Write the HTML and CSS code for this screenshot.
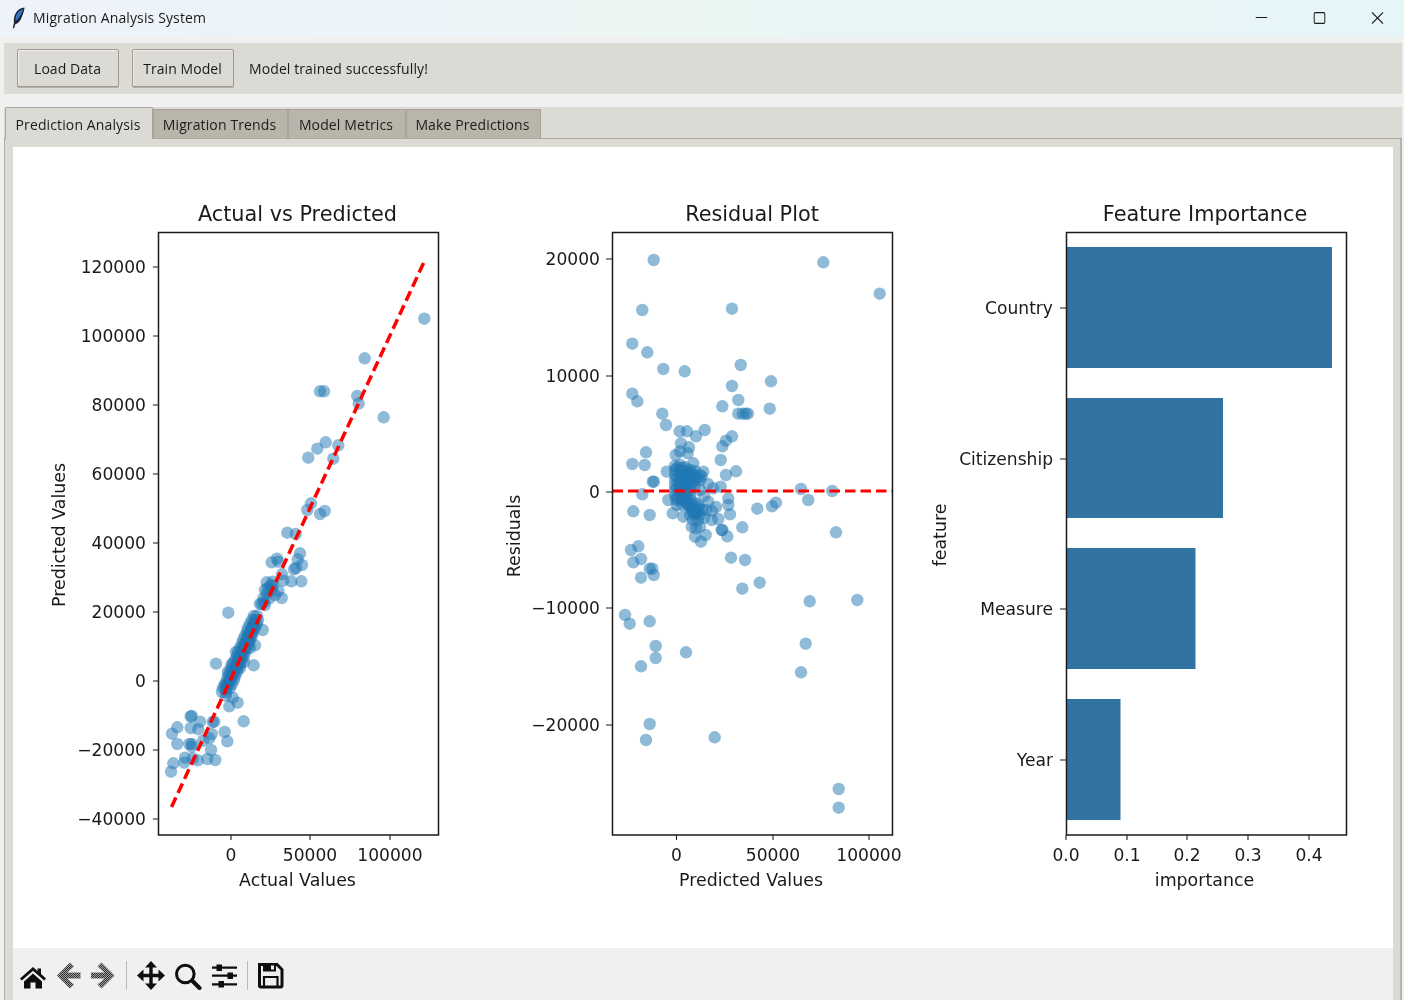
FILE: index.html
```html
<!DOCTYPE html>
<html lang="en">
<head>
<meta charset="utf-8">
<title>Migration Analysis System</title>
<link rel="stylesheet" href="styles.css">
</head>
<body>
<div class="app">
  <header class="titlebar">
    <svg class="feather" viewBox="0 0 13 22" width="13" height="22"><path class="feather-dark" d="M12.500 .5C9 .5 5.500 2.500 3.500 6.500 2 9.500 1.500 13 2 15.500L.8 21 2 21.400 3.400 17C6.500 16.500 8.500 13.500 10 9.500 11.200 6.500 12.500 3 12.500 .5Z"/><path class="feather-blue" d="M11.200 2.200C8.500 2.700 6 4.500 4.700 7.300 3.800 9.500 3.300 12 3.500 14 6 12.500 8 9.500 9.300 6.800 10 5.300 10.800 3.700 11.200 2.200Z"/></svg>
    <span class="title">Migration Analysis System</span>
    <div class="winctl">
      <svg viewBox="0 0 12 12" width="12" height="12"><path class="ctl" d="M0 5.500H12"/></svg>
      <svg viewBox="0 0 12 12" width="12" height="12"><rect class="ctl" x=".6" y=".6" width="10.800" height="10.800" rx="1.500"/></svg>
      <svg viewBox="0 0 12 12" width="12" height="12"><path class="ctl" d="M.4 .4L11.600 11.600M11.600 .4L.4 11.600"/></svg>
    </div>
  </header>

  <section class="controls">
    <button class="btn btn-load">Load Data</button>
    <button class="btn btn-train">Train Model</button>
    <span class="status">Model trained successfully!</span>
  </section>

  <section class="notebook">
    <nav class="tabs">
      <div class="tab active">Prediction Analysis</div>
      <div class="tab t2">Migration Trends</div>
      <div class="tab t3">Model Metrics</div>
      <div class="tab t4">Make Predictions</div>
    </nav>
    <div class="pane">
      <div class="canvas-wrap">
      <svg class="plot" viewBox="13 147 1380 801" width="1380" height="801">
        <!-- Chart 1 -->
        <text class="ttl" x="297.500" y="221">Actual vs Predicted</text>
        <g class="ticks">
          <path d="M153 267h5M153 336h5M153 405h5M153 474h5M153 543h5M153 612h5M153 681h5M153 750h5M153 819h5M231 835v5M310 835v5M390 835v5"/>
        </g>
        <g class="yl">
          <text x="146" y="273">120000</text><text x="146" y="342">100000</text><text x="146" y="411">80000</text><text x="146" y="480">60000</text><text x="146" y="549">40000</text><text x="146" y="618">20000</text><text x="146" y="687">0</text><text x="146" y="756">−20000</text><text x="146" y="825">−40000</text>
        </g>
        <g class="xl"><text x="231" y="861">0</text><text x="310" y="861">50000</text><text x="390" y="861">100000</text></g>
        <text class="axl" x="297.500" y="886">Actual Values</text>
        <text class="axl" transform="translate(65 535) rotate(-90)">Predicted Values</text>
        <g class="pts">
          <circle cx="424.300" cy="318.700"/><circle cx="364.700" cy="358.300"/><circle cx="320" cy="391.300"/><circle cx="324" cy="391.300"/><circle cx="357.300" cy="396"/><circle cx="358.700" cy="403.700"/><circle cx="383.700" cy="417.300"/><circle cx="325.700" cy="442.300"/><circle cx="317.300" cy="448.700"/><circle cx="338.300" cy="445.300"/><circle cx="308.300" cy="457.700"/><circle cx="333.300" cy="458.700"/><circle cx="311" cy="503.300"/><circle cx="307.300" cy="510"/><circle cx="320" cy="514"/><circle cx="324.700" cy="511"/><circle cx="287.300" cy="532.700"/><circle cx="295.700" cy="534"/>
          <circle cx="300" cy="553.300"/><circle cx="297.700" cy="559.300"/><circle cx="302" cy="565"/><circle cx="294" cy="569.300"/><circle cx="296" cy="568"/><circle cx="277" cy="558.700"/><circle cx="271.700" cy="562.300"/><circle cx="278.300" cy="561.700"/><circle cx="282" cy="574.300"/><circle cx="283.300" cy="580.700"/><circle cx="291.300" cy="581.300"/><circle cx="301.300" cy="581.300"/>
          <circle cx="266.700" cy="582.300"/><circle cx="272.700" cy="581.700"/><circle cx="265" cy="590"/><circle cx="271.700" cy="590"/><circle cx="278.300" cy="591"/><circle cx="281.700" cy="598"/><circle cx="263.300" cy="598.300"/><circle cx="261.700" cy="604"/><circle cx="269.300" cy="598.300"/><circle cx="275" cy="595"/><circle cx="266.700" cy="593.300"/><circle cx="265" cy="605"/><circle cx="260" cy="604"/><circle cx="270.700" cy="585"/><circle cx="268" cy="588"/><circle cx="273" cy="586"/><circle cx="264" cy="602"/><circle cx="228.300" cy="612.700"/><circle cx="216" cy="663.700"/><circle cx="253.700" cy="665.300"/><circle cx="262.700" cy="630"/><circle cx="255" cy="645.300"/>
          <circle cx="191.700" cy="716"/><circle cx="190.700" cy="716.500"/><circle cx="190.700" cy="728"/><circle cx="200" cy="721.700"/><circle cx="198.300" cy="729.300"/><circle cx="212.700" cy="722"/><circle cx="214.300" cy="721.700"/><circle cx="177.300" cy="727.300"/><circle cx="172" cy="733.700"/><circle cx="177.300" cy="744"/><circle cx="189.300" cy="744"/><circle cx="192" cy="744"/><circle cx="191.700" cy="746.700"/><circle cx="203.300" cy="740.700"/><circle cx="209.300" cy="738.300"/><circle cx="211.700" cy="734"/><circle cx="224.700" cy="732"/><circle cx="227.300" cy="741.300"/><circle cx="211" cy="750"/><circle cx="185" cy="757.700"/><circle cx="184.300" cy="762.700"/><circle cx="197.700" cy="760.300"/><circle cx="207.300" cy="759"/><circle cx="215.300" cy="760"/><circle cx="192.700" cy="758.300"/><circle cx="173.300" cy="763.300"/><circle cx="171" cy="771.700"/><circle cx="243.700" cy="721.300"/><circle cx="229.300" cy="706.300"/><circle cx="237.700" cy="702.700"/><circle cx="232.700" cy="697.700"/><circle cx="226" cy="695.700"/>
          <circle cx="222" cy="692"/><circle cx="226" cy="692"/><circle cx="223" cy="688"/><circle cx="227" cy="688"/><circle cx="230" cy="688"/><circle cx="225" cy="684"/><circle cx="228" cy="684"/><circle cx="232" cy="684"/><circle cx="227" cy="680"/><circle cx="230" cy="680"/><circle cx="234" cy="680"/><circle cx="228" cy="676"/><circle cx="232" cy="676"/><circle cx="235" cy="676"/><circle cx="230" cy="672"/><circle cx="233" cy="672"/><circle cx="237" cy="672"/><circle cx="231" cy="668"/><circle cx="235" cy="668"/><circle cx="238" cy="668"/><circle cx="233" cy="664"/><circle cx="237" cy="664"/><circle cx="240" cy="664"/><circle cx="235" cy="660"/><circle cx="238" cy="660"/><circle cx="242" cy="660"/><circle cx="237" cy="656"/><circle cx="240" cy="656"/><circle cx="244" cy="656"/><circle cx="238" cy="652"/><circle cx="242" cy="652"/><circle cx="245" cy="652"/><circle cx="240" cy="648"/><circle cx="243" cy="648"/><circle cx="247" cy="648"/><circle cx="242" cy="644"/><circle cx="245" cy="644"/><circle cx="249" cy="644"/><circle cx="243" cy="640"/><circle cx="247" cy="640"/><circle cx="250" cy="640"/><circle cx="245" cy="636"/><circle cx="248" cy="636"/><circle cx="252" cy="636"/><circle cx="247" cy="632"/><circle cx="250" cy="632"/><circle cx="253" cy="632"/><circle cx="248" cy="628"/><circle cx="252" cy="628"/><circle cx="255" cy="628"/><circle cx="250" cy="624"/><circle cx="254" cy="624"/><circle cx="257" cy="624"/><circle cx="252" cy="620"/><circle cx="255" cy="620"/><circle cx="258" cy="620"/><circle cx="254" cy="616"/><circle cx="257" cy="616"/>
          <circle cx="225" cy="686"/><circle cx="229" cy="682"/><circle cx="231" cy="678"/><circle cx="233" cy="674"/><circle cx="235" cy="670"/><circle cx="237" cy="666"/><circle cx="239" cy="662"/><circle cx="240" cy="658"/><circle cx="242" cy="654"/><circle cx="244" cy="650"/><circle cx="246" cy="646"/><circle cx="248" cy="642"/><circle cx="249" cy="638"/><circle cx="251" cy="634"/><circle cx="252" cy="630"/><circle cx="254" cy="626"/><circle cx="240" cy="668"/><circle cx="244" cy="662"/><circle cx="228" cy="672"/><circle cx="232" cy="664"/><circle cx="236" cy="652"/><circle cx="250" cy="648"/>
        </g>
        <path class="core-line" d="M226 688L254 622"/>
        <path class="redline" d="M171.500 807L424.500 261"/>
        <rect class="frame" x="158.500" y="232.500" width="280" height="602.500"/>

        <!-- Chart 2 -->
        <text class="ttl" x="752" y="221">Residual Plot</text>
        <g class="ticks">
          <path d="M606 259h6M606 376h6M606 492h6M606 608h6M606 725h6M676.500 835v5M773 835v5M869 835v5"/>
        </g>
        <g class="yl">
          <text x="600" y="265">20000</text><text x="600" y="382">10000</text><text x="600" y="498">0</text><text x="600" y="614">−10000</text><text x="600" y="731">−20000</text>
        </g>
        <g class="xl"><text x="676.500" y="861">0</text><text x="773" y="861">50000</text><text x="869" y="861">100000</text></g>
        <text class="axl" x="751" y="886">Predicted Values</text>
        <text class="axl" transform="translate(520 536) rotate(-90)">Residuals</text>
        <g class="pts">
          <circle cx="653.700" cy="260"/><circle cx="823.300" cy="262.300"/><circle cx="879.700" cy="293.700"/><circle cx="642.300" cy="310"/><circle cx="732" cy="308.700"/><circle cx="632.300" cy="343.700"/><circle cx="647.300" cy="352.300"/><circle cx="663.300" cy="369"/><circle cx="684.700" cy="371.300"/><circle cx="740.700" cy="365"/><circle cx="771" cy="381.300"/><circle cx="732" cy="386"/><circle cx="632.300" cy="393.700"/><circle cx="637.300" cy="401.300"/><circle cx="738.300" cy="400"/><circle cx="722.300" cy="406.300"/><circle cx="769.700" cy="408.700"/><circle cx="738.300" cy="413.700"/><circle cx="742.700" cy="413.700"/><circle cx="745.700" cy="413.700"/><circle cx="748" cy="413.700"/><circle cx="662.300" cy="413.700"/><circle cx="666" cy="425"/><circle cx="679.700" cy="431.300"/><circle cx="687" cy="431.300"/><circle cx="696" cy="436.300"/><circle cx="704.700" cy="430"/><circle cx="732" cy="436.300"/><circle cx="726" cy="440.700"/><circle cx="722.300" cy="446.300"/><circle cx="681" cy="443.300"/><circle cx="689" cy="447.300"/><circle cx="680" cy="451.300"/><circle cx="675.700" cy="455"/><circle cx="646" cy="452.300"/><circle cx="687.700" cy="453.300"/><circle cx="720.700" cy="460"/><circle cx="632.300" cy="464"/><circle cx="644.700" cy="465"/><circle cx="736" cy="471.300"/><circle cx="726" cy="475"/><circle cx="652.700" cy="481.700"/><circle cx="654" cy="481.700"/><circle cx="642.300" cy="494.300"/><circle cx="801" cy="489"/><circle cx="832.300" cy="491"/><circle cx="808.300" cy="500"/><circle cx="776" cy="502.700"/><circle cx="772" cy="506.300"/><circle cx="757.300" cy="508.700"/><circle cx="633.300" cy="511.300"/><circle cx="649.700" cy="515"/>
          <circle cx="836" cy="532.300"/><circle cx="742.300" cy="527.300"/><circle cx="722.300" cy="530"/><circle cx="727.300" cy="536.300"/><circle cx="731" cy="557.700"/><circle cx="745" cy="560"/><circle cx="638.300" cy="546.300"/><circle cx="631" cy="550"/><circle cx="641" cy="559"/><circle cx="633.300" cy="562.300"/><circle cx="649.700" cy="568.700"/><circle cx="652.300" cy="568.700"/><circle cx="653.700" cy="575"/><circle cx="641" cy="577.700"/><circle cx="759.700" cy="582.700"/><circle cx="742.300" cy="588.700"/><circle cx="809.700" cy="601.300"/><circle cx="857.300" cy="600"/><circle cx="625" cy="615"/><circle cx="629.700" cy="623.700"/><circle cx="649.700" cy="621.300"/><circle cx="655.700" cy="646"/><circle cx="686" cy="652.300"/><circle cx="805.700" cy="643.700"/><circle cx="655.700" cy="658"/><circle cx="641" cy="666.300"/><circle cx="801" cy="672.300"/><circle cx="649.700" cy="724"/><circle cx="646" cy="740"/><circle cx="714.700" cy="737.300"/><circle cx="838.700" cy="789"/><circle cx="838.700" cy="807.700"/>
          <circle cx="695" cy="536.700"/><circle cx="701" cy="541.700"/><circle cx="705.700" cy="535"/><circle cx="691.700" cy="526.700"/><circle cx="700" cy="526.700"/><circle cx="711.700" cy="520"/><circle cx="718.300" cy="519"/><circle cx="721.700" cy="530"/><circle cx="730" cy="514.300"/><circle cx="728.300" cy="505"/><circle cx="728.300" cy="498.300"/><circle cx="720.700" cy="486.700"/><circle cx="708.300" cy="501.700"/><circle cx="713.300" cy="488.300"/><circle cx="701.700" cy="476.700"/><circle cx="666.700" cy="471.700"/><circle cx="668.300" cy="500"/><circle cx="672.700" cy="513.300"/><circle cx="683.300" cy="516.700"/><circle cx="693.300" cy="463.300"/><circle cx="703.300" cy="471.700"/><circle cx="706" cy="510"/><circle cx="704" cy="496"/><circle cx="700" cy="490"/><circle cx="712" cy="511"/><circle cx="716" cy="507"/><circle cx="708" cy="484"/><circle cx="696" cy="528"/>
          <circle cx="675" cy="466"/><circle cx="680" cy="465"/><circle cx="685" cy="467"/><circle cx="675" cy="470"/><circle cx="680" cy="470"/><circle cx="685" cy="471"/><circle cx="690" cy="470"/><circle cx="695" cy="471"/><circle cx="675" cy="475"/><circle cx="680" cy="475"/><circle cx="685" cy="475"/><circle cx="690" cy="475"/><circle cx="695" cy="476"/><circle cx="700" cy="475"/><circle cx="675" cy="480"/><circle cx="680" cy="480"/><circle cx="685" cy="480"/><circle cx="690" cy="480"/><circle cx="695" cy="480"/><circle cx="700" cy="480"/><circle cx="675" cy="485"/><circle cx="680" cy="485"/><circle cx="685" cy="485"/><circle cx="690" cy="485"/><circle cx="695" cy="485"/><circle cx="675" cy="490"/><circle cx="680" cy="490"/><circle cx="685" cy="490"/><circle cx="690" cy="490"/><circle cx="675" cy="495"/><circle cx="680" cy="495"/><circle cx="685" cy="495"/><circle cx="690" cy="495"/><circle cx="676" cy="500"/><circle cx="681" cy="500"/><circle cx="686" cy="500"/><circle cx="691" cy="500"/><circle cx="677" cy="505"/><circle cx="682" cy="505"/><circle cx="688" cy="505"/><circle cx="693" cy="505"/><circle cx="698" cy="505"/><circle cx="692" cy="510"/><circle cx="697" cy="510"/><circle cx="702" cy="510"/><circle cx="690" cy="515"/><circle cx="695" cy="515"/><circle cx="700" cy="515"/><circle cx="693" cy="520"/><circle cx="698" cy="520"/><circle cx="704" cy="518"/>
          <circle cx="677" cy="468"/><circle cx="682" cy="468"/><circle cx="687" cy="473"/><circle cx="692" cy="473"/><circle cx="697" cy="478"/><circle cx="677" cy="478"/><circle cx="682" cy="478"/><circle cx="687" cy="483"/><circle cx="692" cy="483"/><circle cx="677" cy="488"/><circle cx="682" cy="488"/><circle cx="687" cy="493"/><circle cx="677" cy="498"/><circle cx="682" cy="498"/><circle cx="687" cy="503"/><circle cx="692" cy="508"/><circle cx="697" cy="513"/><circle cx="693" cy="513"/><circle cx="699" cy="508"/><circle cx="695" cy="503"/>
        </g>
        <path class="core-area" d="M677 469L692 468 698 474 698 482 690 490 692 501 701 510 699 518 692 518 684 509 677 500 675 485Z"/>
        <path class="redline thin" d="M612.500 491H892"/>
        <rect class="frame" x="612.500" y="232.500" width="280" height="602.500"/>

        <!-- Chart 3 -->
        <text class="ttl" x="1205" y="221">Feature Importance</text>
        <rect class="bar" x="1066" y="247" width="266" height="121"/>
        <rect class="bar" x="1066" y="398" width="157" height="120"/>
        <rect class="bar" x="1066" y="548" width="129.500" height="121"/>
        <rect class="bar" x="1066" y="699" width="54.500" height="121"/>
        <g class="ticks">
          <path d="M1060 308h6M1060 459h6M1060 609h6M1060 760h6M1066 835v5M1127 835v5M1187 835v5M1248 835v5M1309 835v5"/>
        </g>
        <g class="yl">
          <text x="1053" y="314">Country</text><text x="1053" y="465">Citizenship</text><text x="1053" y="615">Measure</text><text x="1053" y="766">Year</text>
        </g>
        <g class="xl"><text x="1066" y="861">0.0</text><text x="1127" y="861">0.1</text><text x="1187" y="861">0.2</text><text x="1248" y="861">0.3</text><text x="1309" y="861">0.4</text></g>
        <text class="axl" x="1204.500" y="886">importance</text>
        <text class="axl" transform="translate(945.500 535) rotate(-90)">feature</text>
        <rect class="frame" x="1066.500" y="232.500" width="280" height="602.500"/>
      </svg>
      </div>
      <div class="navbar">
        <svg class="ic" viewBox="0 0 26 30" width="26" height="30"><path class="solid" d="M13 7L0 18.500 1.800 20.500 13 10.800 24.200 20.500 26 18.500 21 14V8.500H17.500V11Z"/><path class="solid" d="M4 21.500L13 13.500 22 21.500V28.500H15.500V22.500H10.500V28.500H4Z"/></svg>
        <svg class="ic" viewBox="0 0 25 30" width="25" height="30"><defs><pattern id="dither" width="2" height="2" patternUnits="userSpaceOnUse"><rect width="2" height="2" fill="#a0a0a0"/><rect width="1" height="1" fill="#303030"/><rect x="1" y="1" width="1" height="1" fill="#303030"/></pattern></defs><path class="dith" d="M1 15.500L14 2.500 18 6.500 11 12.500H24.500V18.500H11L18 24.500 14 28.500Z"/></svg>
        <svg class="ic" viewBox="0 0 25 30" width="25" height="30"><path class="dith" d="M23.500 15.500L10.500 2.500 6.500 6.500 13.500 12.500H0V18.500H13.500L6.500 24.500 10.500 28.500Z"/></svg>
        <span class="vsep"></span>
        <svg class="ic" viewBox="0 0 28 30" width="28" height="30"><path class="solid" d="M14 1L20 7.500H15.700V13.800H21.500V9.500L28 15.500 21.500 21.500V17.200H15.700V23.500H20L14 30 8 23.500H12.300V17.200H6.500V21.500L0 15.500 6.500 9.500V13.800H12.300V7.500H8Z"/></svg>
        <svg class="ic" viewBox="0 0 27 30" width="27" height="30"><circle class="line" cx="10.300" cy="14" r="8.800"/><path class="line fat" d="M17.500 21L24.500 28"/></svg>
        <svg class="ic" viewBox="0 0 25 30" width="25" height="30"><path class="line thin2" d="M0 7.700H25M0 15.700H25M0 24.300H25"/><rect class="solid" x="4.500" y="4.500" width="5.500" height="6.500"/><rect class="solid" x="15.500" y="12.500" width="5.500" height="6.500"/><rect class="solid" x="6.500" y="21" width="5.500" height="6.500"/></svg>
        <span class="vsep"></span>
        <svg class="ic" viewBox="0 0 26 30" width="26" height="30"><path class="line" d="M1.500 4.500H19L24 9.500V25.500Q24 27 22.500 27H3Q1.500 27 1.500 25.500Z"/><path class="solid" d="M5 4H18V11.500H5Z"/><rect class="slot" x="13" y="5.500" width="3" height="4"/><path class="line thin2" d="M6 26.500V17H19.500V26.500"/></svg>
      </div>
    </div>
  </section>
</div>
</body>
</html>
```

FILE: styles.css
```css
* { box-sizing: border-box; }
html, body { margin: 0; padding: 0; }
body {
  width: 1404px;
  height: 1000px;
  overflow: hidden;
  background: #f0f0f0;
  font-family: "Open Sans", "Noto Sans", sans-serif;
  color: #1a1a1a;
}
.app {
  display: flex;
  flex-direction: column;
  height: 1000px;
  filter: blur(0.3px);
}

/* window title bar */
.titlebar {
  display: flex;
  align-items: center;
  flex: 0 0 37px;
  padding: 0 20px 2px 12px;
  background: linear-gradient(90deg, #eef3f9 0%, #ebf4f8 30%, #ebf6f3 45%, #e8f5f6 70%, #e6f5f8 100%);
}
.feather { flex: none; margin-right: 8px; }
.feather-blue { fill: #2f78c8; }
.feather-dark { fill: #1c2433; }
.title { font-size: 14px; letter-spacing: .13px; color: #1a1a1a; }
.winctl { display: flex; gap: 46px; margin-left: auto; transform: translateX(-.5px); }
.ctl { fill: none; stroke: #1a1a1a; stroke-width: 1.200; }

/* controls strip */
.controls {
  display: flex;
  align-items: center;
  height: 51px;
  margin: 6px 2px 13px 4px;
  padding: 0 0 1px 13px;
  background: #dcdad5;
  font-size: 14px;
}
.btn {
  height: 38px;
  padding: 0 1px 0 0;
  border: 1px solid #9e9a91;
  border-radius: 2px;
  background: #dcdad5;
  box-shadow: inset 1px 1px 0 #eeedea, 0 1px 0 #b4b0a7;
  font: inherit;
  letter-spacing: .06px;
  color: #1a1a1a;
}
.btn-load { width: 102px; }
.btn-train { width: 102px; margin-left: 13px; }
.status { margin-left: 15px; letter-spacing: .1px; color: #1a1a1a; }

/* notebook */
.notebook {
  flex: 1;
  display: flex;
  flex-direction: column;
  margin: 0 2px 0 4px;
  background: #dcdad5;
}
.tabs {
  display: flex;
  align-items: flex-end;
  height: 32px;
  padding-left: 1px;
  border-bottom: 1px solid #aeaaa1;
  font-size: 14px;
  letter-spacing: .12px;
}
.tab {
  display: flex;
  align-items: center;
  justify-content: center;
  height: 29px;
  padding: 0 2px 0 0;
  background: #bab5ab;
  border: 1px solid #a8a49b;
  border-bottom: 0;
  color: #1c1c1c;
}
.tab.active {
  width: 148px;
  height: 32px;
  margin-bottom: -1px;
  padding-top: 1px;
  background: #dcdad5;
  border-radius: 2px 2px 0 0;
}
.tab.t2 { width: 135px; }
.tab.t3 { width: 118px; }
.tab.t4 { width: 135px; }
.pane {
  flex: 1;
  display: flex;
  flex-direction: column;
  padding: 8px 7px 0 8px;
  border-left: 1px solid #b0aca3;
  border-right: 2px solid #b8b4ab;
  min-height: 0;
}
.canvas-wrap { flex: 0 0 801px; background: #fff; }
.plot { display: block; font-family: "DejaVu Sans", sans-serif; }

/* chart parts */
.ttl { font-size: 20.800px; text-anchor: middle; fill: #1a1a1a; }
.axl { font-size: 17.400px; text-anchor: middle; fill: #1a1a1a; }
.yl text { font-size: 17.100px; text-anchor: end; fill: #1a1a1a; }
.xl text { font-size: 17.100px; text-anchor: middle; fill: #1a1a1a; }
.ticks path { fill: none; stroke: #1a1a1a; stroke-width: 1.100; }
.frame { fill: none; stroke: #1a1a1a; stroke-width: 1.500; }
.pts circle { r: 6.200px; fill: #1f77b4; fill-opacity: .5; }
.core-line { fill: none; stroke: #1f77b4; stroke-width: 10; stroke-linecap: round; stroke-opacity: .7; }
.core-area { fill: #1f77b4; fill-opacity: .7; }
.redline { fill: none; stroke: #ff0000; stroke-width: 3.500; stroke-dasharray: 10.500 5; }
.redline.thin { stroke-width: 3; }
.bar { fill: #3274a1; }

/* matplotlib navigation bar */
.navbar {
  flex: 1;
  display: flex;
  align-items: center;
  gap: 10px;
  padding: 12px 0 10px 7px;
  background: #f0f0f0;
}
.ic { flex: none; display: block; }
.solid { fill: #0e0e0e; }
.slot { fill: #f0f0f0; }
.dith { fill: url(#dither); }
.line { fill: none; stroke: #0e0e0e; stroke-width: 3; }
.line.fat { stroke-width: 4; stroke-linecap: round; }
.line.thin2 { stroke-width: 2.200; }
.vsep { flex: none; width: 1px; height: 29px; background: #b8b8b8; }
```
